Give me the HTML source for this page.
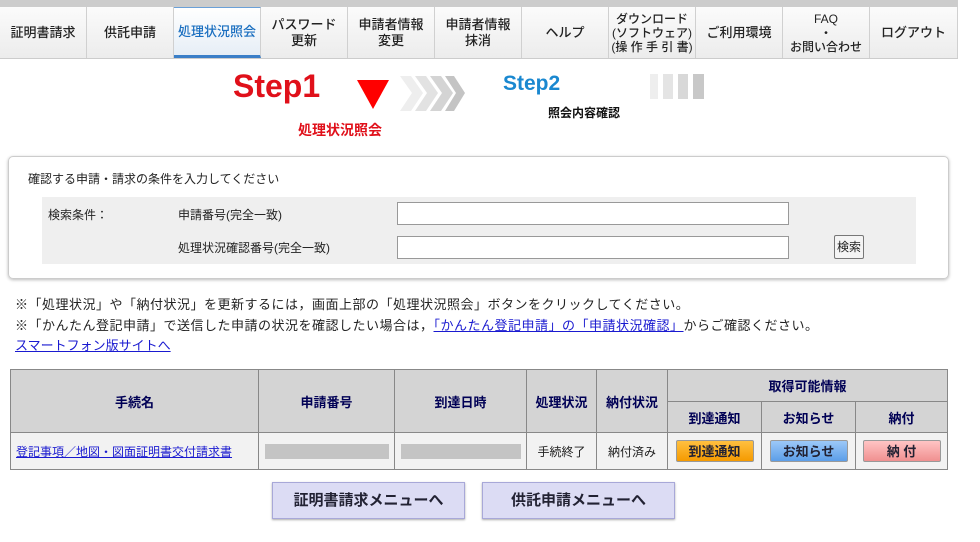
<!DOCTYPE html>
<html><head><meta charset="utf-8"><style>
*{box-sizing:border-box;margin:0;padding:0}
body{width:980px;height:542px;background:#fff;font-family:"Liberation Sans","Noto Sans CJK JP",sans-serif;font-size:13px;color:#222;position:relative;overflow:hidden}
.a{position:absolute}
.nav{left:0;top:0;width:958px;height:59px;background:#ccc}
.tab{position:absolute;top:7px;height:51px;background:linear-gradient(#fbfbfb,#ececec);border-right:1px solid #d0d0d0;display:flex;align-items:center;justify-content:center;text-align:center;font-size:13px;line-height:16px;color:#222;font-weight:500}
.tab.on{background:linear-gradient(#fff,#e6eef6);color:#1a6fc0;border-bottom:3px solid #3a7fc8;border-top:1px solid #6aa0d8}
table{border-collapse:collapse;position:absolute;left:10px;top:369px;width:938px;font-size:13px}
td,th{border:1px solid #888;text-align:center}
th{background:#d4d4d4;color:#000055;font-weight:bold}
td{background:#f2f2f2;height:37px;font-size:12px}
.gr{display:inline-block;width:124px;height:15px;background:#c4c4c4;vertical-align:middle}
.btn{display:inline-block;width:78px;height:22px;line-height:22px;border:1px solid #999;border-radius:2px;font-weight:bold;color:#223;font-size:13px}
.big{position:absolute;top:482px;height:37px;width:193px;background:#dcdcf4;border:1px solid #a8a8d8;box-shadow:0 1px 2px #aaa;text-align:center;line-height:35px;font-weight:bold;font-size:15px;color:#223}
a{color:#1a1ad0}
.note{letter-spacing:0.5px}
</style></head><body>
<div class="a nav"></div>
<div class="tab" style="left:0;width:87px">証明書請求</div>
<div class="tab" style="left:87px;width:87px">供託申請</div>
<div class="tab on" style="left:174px;width:87px">処理状況照会</div>
<div class="tab" style="left:261px;width:87px">パスワード<br>更新</div>
<div class="tab" style="left:348px;width:87px">申請者情報<br>変更</div>
<div class="tab" style="left:435px;width:87px">申請者情報<br>抹消</div>
<div class="tab" style="left:522px;width:87px">ヘルプ</div>
<div class="tab" style="left:609px;width:87px;font-size:12px;line-height:14px">ダウンロード<br>(ソフトウェア)<br>(操 作 手 引 書)</div>
<div class="tab" style="left:696px;width:87px">ご利用環境</div>
<div class="tab" style="left:783px;width:87px;font-size:12px;line-height:14px">FAQ<br>・<br>お問い合わせ</div>
<div class="tab" style="left:870px;width:88px">ログアウト</div>

<div class="a" style="left:233px;top:68px;font-size:32px;font-weight:bold;color:#e0101a">Step1</div>
<svg class="a" style="left:355px;top:74px" width="110" height="40"><polygon points="2,6 34,6 18,35" fill="#f00"/><polygon points="45,2 56,2 68,19 56,37 45,37 57,19" fill="#eee"/><polygon points="60,2 71,2 83,19 71,37 60,37 72,19" fill="#e2e2e2"/><polygon points="75,2 86,2 98,19 86,37 75,37 87,19" fill="#d4d4d4"/><polygon points="90,2 99,2 110,19 99,37 90,37 101,19" fill="#c4c4c4"/></svg>
<div class="a" style="left:298px;top:120px;font-size:14px;font-weight:bold;color:#e0101a">処理状況照会</div>
<div class="a" style="left:503px;top:72px;font-size:21px;font-weight:bold;color:#1a88d0">Step2</div>
<div class="a" style="left:548px;top:104px;font-size:12px;font-weight:bold;color:#111">照会内容確認</div>
<div class="a" style="left:650px;top:74px;width:8px;height:25px;background:#eee"></div>
<div class="a" style="left:663px;top:74px;width:10px;height:25px;background:#e4e4e4"></div>
<div class="a" style="left:678px;top:74px;width:10px;height:25px;background:#d8d8d8"></div>
<div class="a" style="left:693px;top:74px;width:11px;height:25px;background:#c8c8c8"></div>

<div class="a" style="left:8px;top:156px;width:941px;height:123px;border:1px solid #ccc;border-radius:5px;box-shadow:0 1px 3px #bbb"></div>
<div class="a" style="left:28px;top:170px;font-size:12px">確認する申請・請求の条件を入力してください</div>
<div class="a" style="left:42px;top:197px;width:874px;height:67px;background:#efefef"></div>
<div class="a" style="left:48px;top:206px;font-size:12px">検索条件：</div>
<div class="a" style="left:178px;top:206px;font-size:12px">申請番号(完全一致)</div>
<div class="a" style="left:178px;top:239px;font-size:12px">処理状況確認番号(完全一致)</div>
<div class="a" style="left:397px;top:202px;width:392px;height:23px;background:#fff;border:1px solid #999"></div>
<div class="a" style="left:397px;top:236px;width:392px;height:23px;background:#fff;border:1px solid #999"></div>
<div class="a" style="left:834px;top:235px;width:30px;height:24px;border:1px solid #777;border-radius:2px;background:#f4f4f4;text-align:center;line-height:22px;font-size:12px">検索</div>

<div class="a note" style="left:15px;top:294px">※「処理状況」や「納付状況」を更新するには，画面上部の「処理状況照会」ボタンをクリックしてください。</div>
<div class="a note" style="left:15px;top:315px">※「かんたん登記申請」で送信した申請の状況を確認したい場合は，<a href="#">「かんたん登記申請」の「申請状況確認」</a>からご確認ください。</div>
<div class="a" style="left:15px;top:335px"><a href="#">スマートフォン版サイトへ</a></div>

<table>
<tr style="height:32px"><th rowspan="2" style="width:248px">手続名</th><th rowspan="2" style="width:136px">申請番号</th><th rowspan="2" style="width:132px">到達日時</th><th rowspan="2" style="width:70px">処理状況</th><th rowspan="2" style="width:71px">納付状況</th><th colspan="3">取得可能情報</th></tr>
<tr style="height:31px"><th style="width:94px">到達通知</th><th style="width:94px">お知らせ</th><th>納付</th></tr>
<tr><td style="text-align:left;padding-left:5px"><a href="#">登記事項／地図・図面証明書交付請求書</a></td><td><span class="gr"></span></td><td><span class="gr" style="width:120px"></span></td><td>手続終了</td><td>納付済み</td>
<td><span class="btn" style="background:linear-gradient(#ffc040,#f59a00)">到達通知</span></td>
<td><span class="btn" style="background:linear-gradient(#9cc8f8,#5c9ee8)">お知らせ</span></td>
<td><span class="btn" style="background:linear-gradient(#ffc4c4,#f09090)">納 付</span></td></tr>
</table>
<div class="big" style="left:272px">証明書請求メニューへ</div>
<div class="big" style="left:482px">供託申請メニューへ</div>
</body></html>
